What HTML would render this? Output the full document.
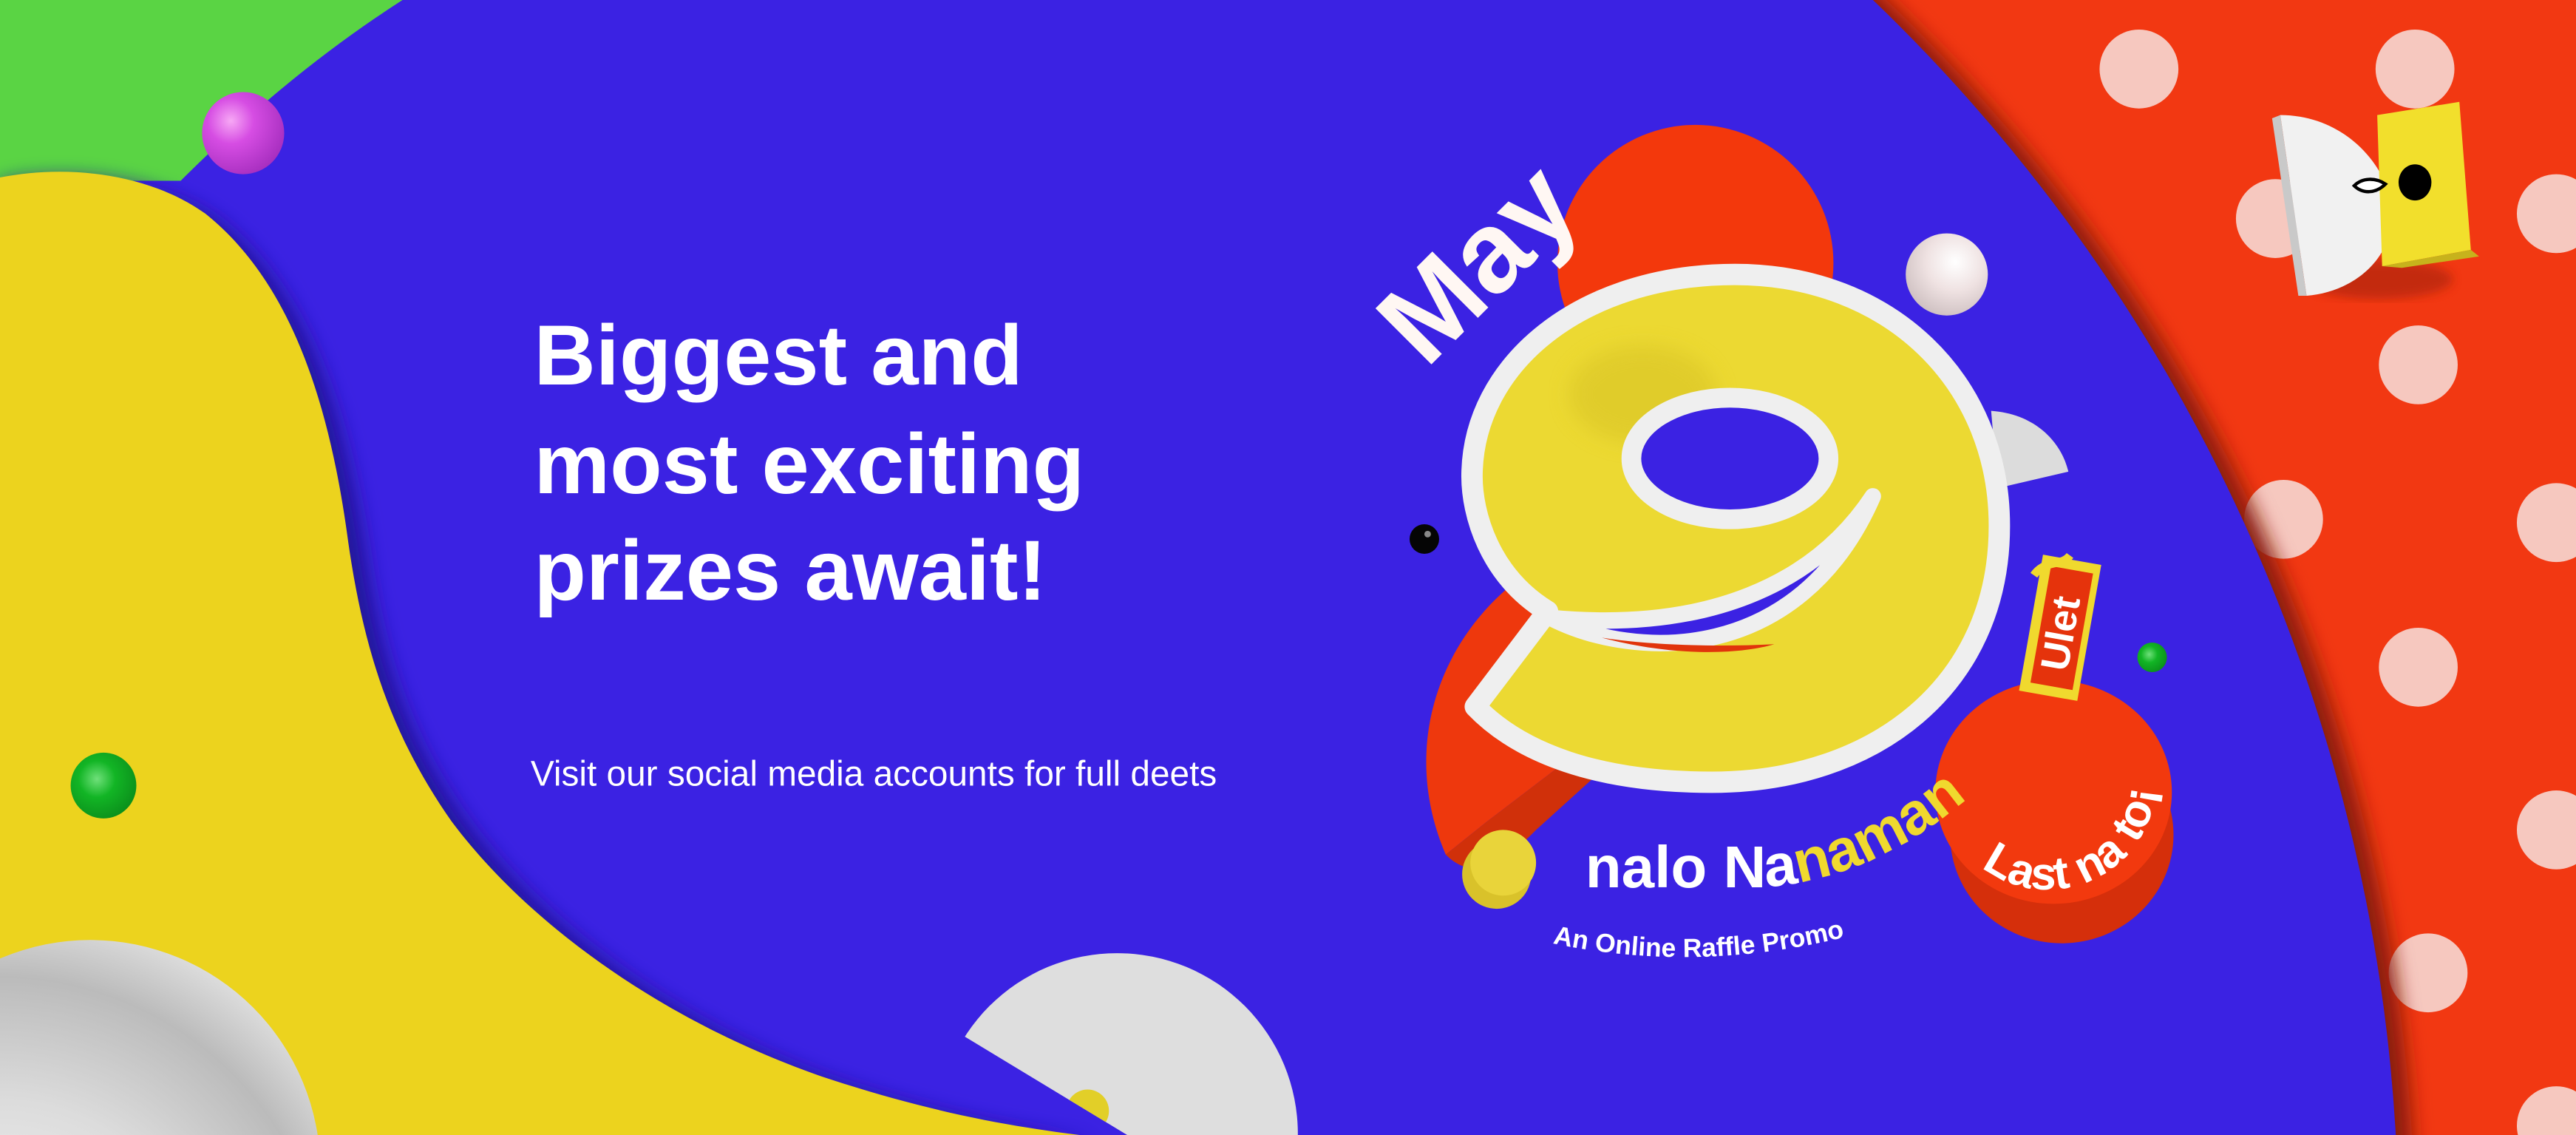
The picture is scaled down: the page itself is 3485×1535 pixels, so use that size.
<!DOCTYPE html>
<html><head><meta charset="utf-8"><style>
html,body{margin:0;padding:0;width:3485px;height:1535px;overflow:hidden;background:#f23812}
svg{display:block;position:absolute;left:0;top:0}
</style></head><body>
<svg width="3485" height="1535" viewBox="0 0 1568 690.65" preserveAspectRatio="none" xmlns="http://www.w3.org/2000/svg">
<defs>
<radialGradient id="pk" cx="0.35" cy="0.35" r="0.7"><stop offset="0" stop-color="#f7a8f5"/><stop offset="0.4" stop-color="#d64de3"/><stop offset="1" stop-color="#a82fc0"/></radialGradient>
<radialGradient id="gr" cx="0.4" cy="0.4" r="0.7"><stop offset="0" stop-color="#6fe07a"/><stop offset="0.4" stop-color="#12b525"/><stop offset="1" stop-color="#0a8a1a"/></radialGradient>
<radialGradient id="wb" cx="0.6" cy="0.35" r="0.7"><stop offset="0" stop-color="#fff"/><stop offset="0.5" stop-color="#efe2e2"/><stop offset="1" stop-color="#cdbfc0"/></radialGradient>
<radialGradient id="wh" cx="0.3" cy="0.8" r="0.9"><stop offset="0" stop-color="#fafafa"/><stop offset="0.5" stop-color="#dcdcdc"/><stop offset="0.8" stop-color="#bbb"/><stop offset="1" stop-color="#e5e5e5"/></radialGradient>
<filter id="bl" x="-20%" y="-20%" width="140%" height="140%"><feGaussianBlur stdDeviation="6"/></filter>
<filter id="bl2"><feGaussianBlur stdDeviation="3"/></filter>
<clipPath id="dc"><polygon points="586,630 690,693 800,693 800,560 560,560 560,615"/></clipPath>
</defs>
<g fill="#f6c8bf">
<circle cx="1302" cy="42" r="24"/><circle cx="1470" cy="42" r="24"/>
<circle cx="1385" cy="133" r="24"/><circle cx="1556" cy="130" r="24"/>
<circle cx="1472" cy="222" r="24"/>
<circle cx="1390" cy="316" r="24"/><circle cx="1556" cy="318" r="24"/>
<circle cx="1472" cy="406" r="24"/>
<circle cx="1390" cy="500" r="24"/><circle cx="1556" cy="505" r="24"/>
<circle cx="1478" cy="592" r="24"/>
<circle cx="1556" cy="685" r="24"/>
</g>
<circle cx="430" cy="752" r="1040" fill="#8a1e08" filter="url(#bl)"/>
<circle cx="421" cy="750" r="1039" fill="#3b22e3"/>
<path d="M0 0 L245 0 Q175 45 110 110 L0 110 Z" fill="#5ad444"/>
<path d="M0 112 C40 104 95 109 132 134 C184 174 208 244 222 334 C232 404 250 454 287 504 C332 564 410 624 510 659 C570 679 620 689 670 695 L0 695 Z" fill="#22129a" filter="url(#bl)"/>
<path d="M0 108 C40 100 90 105 125 130 C175 170 200 240 212 330 C222 400 240 450 275 500 C320 560 400 620 500 655 C560 675 610 685 660 691 L0 691 Z" fill="#ecd31e"/>
<circle cx="148" cy="81" r="25" fill="url(#pk)"/>
<circle cx="63" cy="478" r="20" fill="url(#gr)"/>
<circle cx="55" cy="712" r="140" fill="url(#wh)"/>
<g clip-path="url(#dc)">
<circle cx="680" cy="690" r="110" fill="#dedede"/>
<circle cx="662" cy="676" r="13" fill="#e2cf28"/>
</g>
<g font-family="Liberation Sans, sans-serif" fill="#fff">
<text x="325" y="234" font-size="52" font-weight="bold">Biggest and</text>
<text x="325" y="300" font-size="52" font-weight="bold">most exciting</text>
<text x="325" y="365" font-size="52" font-weight="bold">prizes await!</text>
<text x="323" y="478" font-size="21.5">Visit our social media accounts for full deets</text>
</g>
<circle cx="1032" cy="160" r="84" fill="#f3380c"/>
<path d="M935 345 C880 380 850 450 880 520 L905 500 L1010 420 L1040 370 Z" fill="#ee380d"/>
<path d="M1040 370 L1010 420 L905 500 L880 520 C900 540 920 520 935 505 L1040 410 Z" fill="#d0300a"/>
<circle cx="1185" cy="167" r="25" fill="url(#wb)"/>
<circle cx="867" cy="328" r="9" fill="#050505"/><circle cx="869" cy="325" r="2" fill="#888"/>
<circle cx="1310" cy="400" r="9" fill="url(#gr)"/>
<path d="M1212 250 C1240 252 1255 270 1259 287 L1216 297 Z" fill="#dcdcdc"/>
<path d="M1056 167 C1150 167 1217 232 1217 320 C1217 418 1140 476 1042 476 C972 476 925 458 898 430 L942 372 C906 350 896 312 896 290 C896 222 962 167 1056 167 Z" fill="#ecd932" stroke="#efefef" stroke-width="13" stroke-linejoin="round"/>
<ellipse cx="1000" cy="240" rx="45" ry="30" fill="#d9c428" opacity="0.6" filter="url(#bl)"/>
<ellipse cx="1053" cy="279" rx="60" ry="37" fill="#3b22e3" stroke="#efefef" stroke-width="12"/>
<path d="M944 376 C995 402 1095 405 1140 302 C1105 355 1040 385 944 376 Z" fill="#3b22e3" stroke="#efefef" stroke-width="10" stroke-linejoin="round"/>
<path d="M975 388 C1020 400 1060 398 1080 392 C1040 394 1000 392 975 388Z" fill="#e1340b"/>
<text x="0" y="0" transform="translate(868,225) rotate(-45)" font-family="Liberation Sans, sans-serif" font-weight="bold" font-size="70" fill="#fff7f3">May</text>
<ellipse cx="1255" cy="508" rx="68" ry="66" fill="#d52f0b"/>
<ellipse cx="1250" cy="482" rx="72" ry="68" fill="#f2390e"/>
<circle cx="911" cy="532" r="21" fill="#d9c22a"/>
<circle cx="915" cy="525" r="20" fill="#e9d43a"/>
<g transform="translate(1254,382) rotate(-80)">
<rect x="-42" y="-18" width="84" height="36" fill="#f0d92e"/>
<rect x="-36" y="-12" width="72" height="26" fill="#e5330c"/>
<text x="-26" y="9" font-family="Liberation Sans, sans-serif" font-weight="bold" font-size="24" fill="#fff">Ulet</text>
</g>
<path d="M1238 350 C1245 340 1255 345 1260 338" stroke="#f0d92e" stroke-width="5" fill="none"/>
<path id="p1" d="M965 540 L1070 540 Q1170 535 1255 425" fill="none"/>
<text font-family="Liberation Sans, sans-serif" font-weight="bold" font-size="36" fill="#fff"><textPath href="#p1">nalo Na<tspan fill="#f0d92e">naman</tspan></textPath></text>
<path id="p2" d="M1203 525 A66 66 0 1 0 1256 410" fill="none"/>
<text font-family="Liberation Sans, sans-serif" font-weight="bold" font-size="28" fill="#fff"><textPath href="#p2" startOffset="4">Last na to¡</textPath></text>
<path id="p3" d="M945 574 Q1050 596 1158 560" fill="none"/>
<text font-family="Liberation Sans, sans-serif" font-weight="bold" font-size="16" fill="#fff"><textPath href="#p3">An Online Raffle Promo</textPath></text>
<ellipse cx="1448" cy="170" rx="45" ry="12" fill="#a5240a" filter="url(#bl2)" opacity="0.6"/>
<path d="M1388 70 C1430 70 1456 105 1456 130 C1456 160 1430 178 1404 180 Z" fill="#f1f1f1"/>
<path d="M1388 70 L1404 180 L1399 180 L1383 72 Z" fill="#c9c9c9"/>
<path d="M1447 70 L1497 62 L1504 152 L1450 162 Z" fill="#f2df2c"/>
<path d="M1504 152 L1450 162 L1462 163 L1509 156 Z" fill="#c7b21c"/>
<ellipse cx="1470" cy="111" rx="10" ry="11" fill="#000"/>
<path d="M1433 113 C1438 108 1446 108 1452 112 C1446 118 1438 118 1433 113 Z" fill="#fff" stroke="#000" stroke-width="2"/>
</svg>
</body></html>
